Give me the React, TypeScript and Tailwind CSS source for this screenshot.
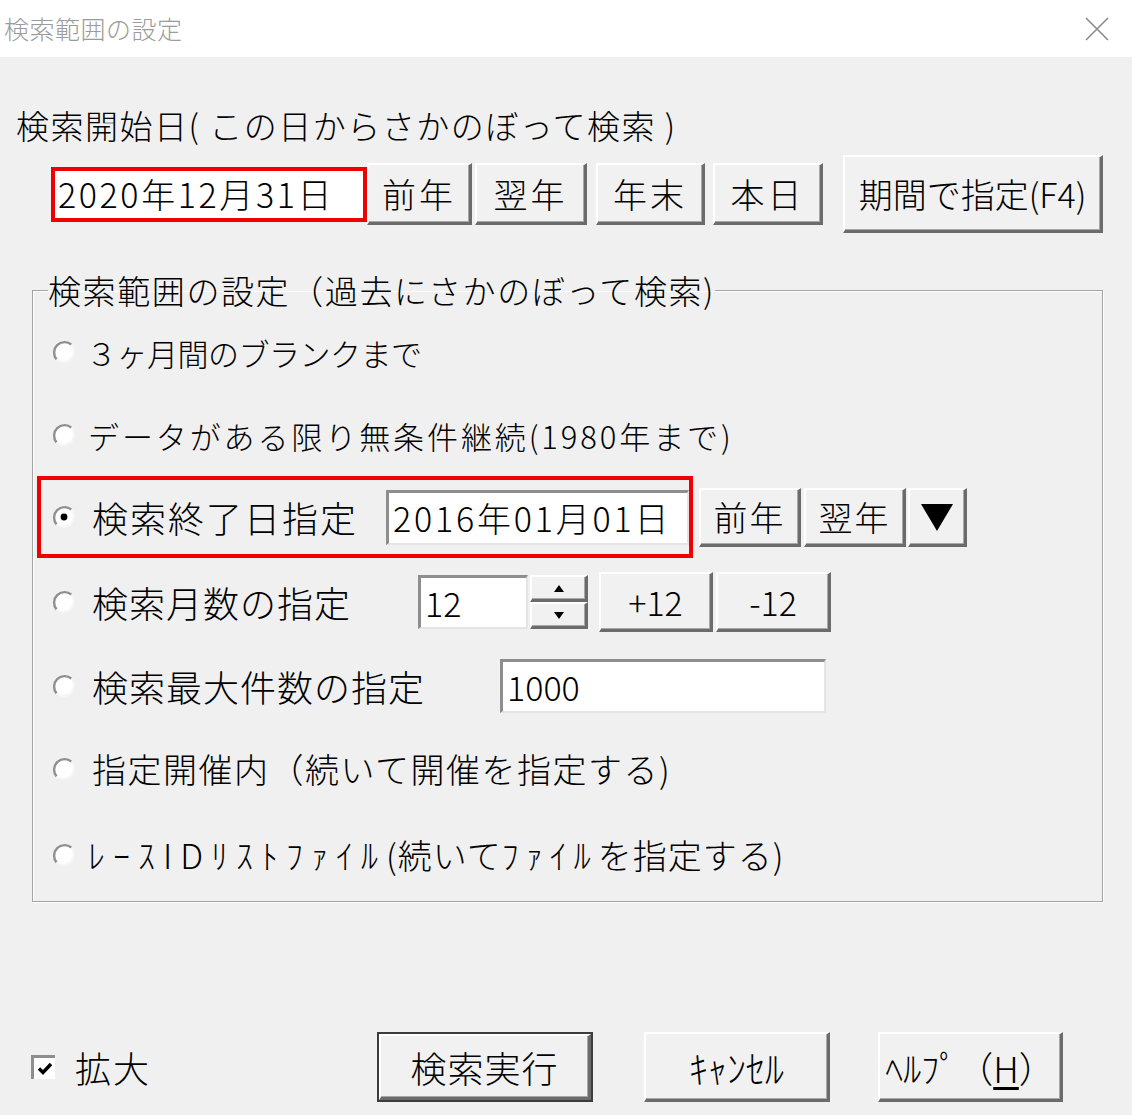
import React from 'react';

const Radio = ({ checked = false }: { checked?: boolean }) => (
  <svg width="24" height="24" viewBox="0 0 24 24" className="shrink-0">
    <circle cx="12" cy="12" r="10.5" fill="#fff" />
    <path d="M4.6 19.4 A10.5 10.5 0 0 1 19.4 4.6" fill="none" stroke="#8f8f8f" strokeWidth="2.4" />
    <path d="M19.4 4.6 A10.5 10.5 0 0 1 4.6 19.4" fill="none" stroke="#f6f6f6" strokeWidth="2" />
    {checked && <circle cx="12" cy="12" r="3.4" fill="#000" />}
  </svg>
);

const Btn = ({ children, className }: { children: React.ReactNode; className: string }) => (
  <div
    className={`flex items-center justify-center bg-[#f1f1f1] border-t-2 border-l-2 border-t-white border-l-white border-r-[3px] border-b-[3px] border-r-[#6b6b6b] border-b-[#6b6b6b] shadow-[inset_-1px_-1px_0_#a8a8a8] leading-none shrink-0 ${className}`}
  >
    {children}
  </div>
);

const Field = ({ children, className }: { children: React.ReactNode; className: string }) => (
  <div
    className={`flex items-center bg-white border-t-[3px] border-l-[3px] border-t-[#8e8e8e] border-l-[#8e8e8e] border-r-2 border-b-2 border-r-[#e4e4e4] border-b-[#e4e4e4] leading-none shrink-0 ${className}`}
  >
    {children}
  </div>
);

export default function App() {
  return (
    <div className="w-[1132px] h-[1115px] bg-[#f0f0f0] font-['Noto_Sans_CJK_JP',sans-serif] font-light text-black flex flex-col overflow-hidden">
      {/* title bar */}
      <div className="h-[57px] bg-white flex items-center justify-between pl-[4px] pr-[23px] shrink-0">
        <span className="text-[25px] leading-none text-[#9b9b9b] tracking-[0.5px]">検索範囲の設定</span>
        <svg width="24" height="24" viewBox="0 0 24 24">
          <path d="M1 1 L23 23 M23 1 L1 23" stroke="#8c8c8c" strokeWidth="1.6" fill="none" />
        </svg>
      </div>

      <div className="mt-[48px] h-[40px] pl-[16px] flex items-center text-[33px] leading-none whitespace-nowrap tracking-[1.5px]">
        検索開始日( この日からさかのぼって検索 )
      </div>

      <div className="mt-[10px] h-[78px] pl-[51px] flex items-center">
        <div className="w-[316px] h-[55px] border-4 border-[#f00000] bg-white flex items-center pl-[3px] text-[34px] leading-none tracking-[2.6px] shrink-0">
          2020年12月31日
        </div>
        <Btn className="w-[105px] h-[62px] text-[34px] tracking-[3px]">前年</Btn>
        <Btn className="ml-[3px] w-[112px] h-[62px] text-[34px] tracking-[3px]">翌年</Btn>
        <Btn className="ml-[9px] w-[109px] h-[62px] text-[34px] tracking-[3px]">年末</Btn>
        <Btn className="ml-[8px] w-[110px] h-[62px] text-[34px] tracking-[3px]">本日</Btn>
        <Btn className="ml-[20px] w-[260px] h-[78px] text-[34px]">期間で指定(F4)</Btn>
      </div>

      <fieldset className="mt-[37px] ml-[32px] w-[1071px] border border-[#a3a3a3] shadow-[inset_1px_1px_0_#fff,1px_1px_0_#fff] px-[4px] pb-[3px]">
        <legend className="ml-[11px] h-[40px] text-[33px] leading-[40px] whitespace-nowrap tracking-[1.6px]">
          検索範囲の設定（過去にさかのぼって検索)
        </legend>

        <div className="h-[84px] flex items-center pl-[15px]">
          <Radio />
          <span className="ml-[10px] text-[31px] leading-none whitespace-nowrap tracking-[-0.5px]">３ヶ月間のブランクまで</span>
        </div>

        <div className="h-[82px] flex items-center pl-[15px]">
          <Radio />
          <span className="ml-[12px] text-[31px] leading-none whitespace-nowrap tracking-[2.9px]">データがある限り無条件継続(1980年まで)</span>
        </div>

        <div className="h-[82px] flex items-center">
          <div className="w-[656px] h-[82px] border-4 border-[#f00000] flex items-center pl-[11px] shrink-0">
            <Radio checked />
            <span className="ml-[16px] text-[36px] leading-none whitespace-nowrap tracking-[2px]">検索終了日指定</span>
            <Field className="ml-auto w-[303px] h-[55px] pl-[4px] text-[34px] tracking-[2.8px]">2016年01月01日</Field>
          </div>
          <Btn className="ml-[6px] w-[102px] h-[59px] text-[34px] tracking-[2px]">前年</Btn>
          <Btn className="ml-[3px] w-[102px] h-[59px] text-[34px] tracking-[2px]">翌年</Btn>
          <Btn className="ml-[2px] w-[59px] h-[59px]">
            <svg width="34" height="30" viewBox="0 0 34 30">
              <path d="M1 2 H33 L17 29 Z" fill="#000" />
            </svg>
          </Btn>
        </div>

        <div className="h-[88px] flex items-center pl-[15px]">
          <Radio />
          <span className="ml-[16px] w-[326px] text-[36px] leading-none whitespace-nowrap tracking-[1px] shrink-0">検索月数の指定</span>
          <Field className="w-[110px] h-[54px] pl-[4px] text-[34px]">12</Field>
          <div className="ml-[2px] w-[58px] h-[54px] flex flex-col shrink-0">
            <Btn className="w-[58px] h-[27px]">
              <svg width="10" height="7" viewBox="0 0 10 7"><path d="M0 7 H10 L5 0 Z" fill="#000" /></svg>
            </Btn>
            <Btn className="w-[58px] h-[27px]">
              <svg width="10" height="7" viewBox="0 0 10 7"><path d="M0 0 H10 L5 7 Z" fill="#000" /></svg>
            </Btn>
          </div>
          <Btn className="ml-[11px] w-[114px] h-[60px] text-[34px]">+12</Btn>
          <Btn className="ml-[3px] w-[115px] h-[60px] text-[34px]">-12</Btn>
        </div>

        <div className="h-[80px] flex items-center pl-[15px]">
          <Radio />
          <span className="ml-[16px] w-[408px] text-[36px] leading-none whitespace-nowrap tracking-[1px] shrink-0">検索最大件数の指定</span>
          <Field className="w-[326px] h-[54px] pl-[4px] text-[34px]">1000</Field>
        </div>

        <div className="h-[86px] flex items-center pl-[15px]">
          <Radio />
          <span className="ml-[16px] text-[34px] leading-none whitespace-nowrap tracking-[1.5px]">指定開催内（続いて開催を指定する)</span>
        </div>

        <div className="h-[86px] flex items-center pl-[15px]">
          <Radio />
          <span className="ml-[12px] text-[34px] leading-none whitespace-nowrap tracking-[1px]">
            <span className="tracking-[8px]">ﾚｰｽIDﾘｽﾄﾌｧｲﾙ</span>(続いて<span className="tracking-[7px]">ﾌｧｲﾙ</span>を指定する)
          </span>
        </div>
      </fieldset>

      <div className="mt-[130px] h-[70px] flex items-center pl-[31px]">
        <div className="w-[346px] flex items-center shrink-0">
          <div className="w-[24px] h-[24px] bg-white border-t-[3px] border-l-[3px] border-t-[#8e8e8e] border-l-[#8e8e8e] flex items-center justify-center">
            <svg width="16" height="14" viewBox="0 0 16 14">
              <path d="M2 6.5 L6 10.5 L14 2" stroke="#000" strokeWidth="3.4" fill="none" />
            </svg>
          </div>
          <span className="ml-[20px] text-[36px] leading-none tracking-[2px]">拡大</span>
        </div>
        <div className="w-[216px] h-[70px] border-2 border-[#3c3c3c] flex shrink-0">
          <Btn className="w-full h-full text-[36px] tracking-[1px]">検索実行</Btn>
        </div>
        <Btn className="ml-[51px] w-[186px] h-[70px] text-[38px]">ｷｬﾝｾﾙ</Btn>
        <Btn className="ml-[48px] w-[185px] h-[70px] text-[36px]">
          ﾍﾙﾌﾟ（<span className="underline underline-offset-4">H</span>）
        </Btn>
      </div>
    </div>
  );
}
